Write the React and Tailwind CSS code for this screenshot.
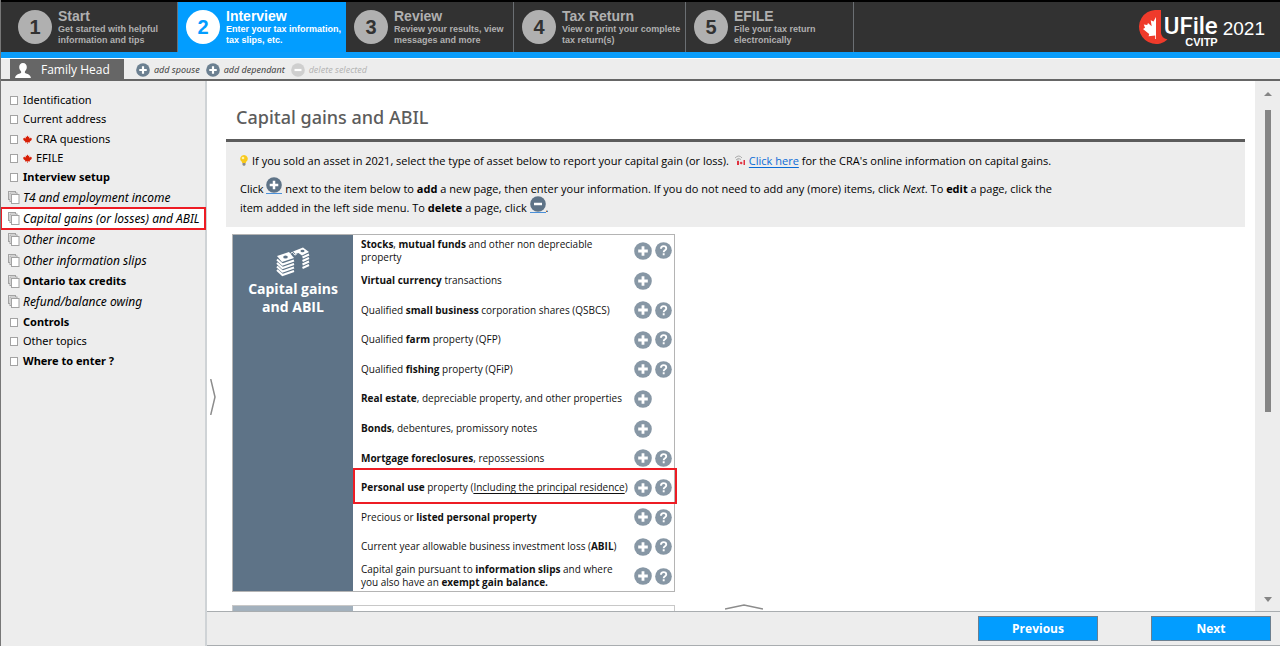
import React from "react";

const steps = [
  { n: 1, title: "Start", lines: ["Get started with helpful", "information and tips"], width: "w-[177px] pl-[17px]" },
  { n: 2, title: "Interview", lines: ["Enter your tax information,", "tax slips, etc."], width: "w-[168px] pl-[8px]", active: true },
  { n: 3, title: "Review", lines: ["Review your results, view", "messages and more"], width: "w-[168px] pl-[8px]" },
  { n: 4, title: "Tax Return", lines: ["View or print your complete", "tax return(s)"], width: "w-[172px] pl-[8px]" },
  { n: 5, title: "EFILE", lines: ["File your tax return", "electronically"], width: "w-[168px] pl-[8px]" },
];

const menu = [
  { label: "Identification", kind: "page", h: "h-[19px]" },
  { label: "Current address", kind: "page", h: "h-[19px]" },
  { label: "CRA questions", kind: "page", h: "h-[20px]", leaf: true },
  { label: "EFILE", kind: "page", h: "h-[19px]", leaf: true },
  { label: "Interview setup", kind: "page", h: "h-[19px]", bold: true },
  { label: "T4 and employment income", kind: "stack", h: "h-[21px]", italic: true },
  { label: "Capital gains (or losses) and ABIL", kind: "stack", h: "h-[21px]", italic: true, selected: true },
  { label: "Other income", kind: "stack", h: "h-[21px]", italic: true },
  { label: "Other information slips", kind: "stack", h: "h-[21px]", italic: true },
  { label: "Ontario tax credits", kind: "stack", h: "h-[20px]", bold: true },
  { label: "Refund/balance owing", kind: "stack", h: "h-[21px]", italic: true },
  { label: "Controls", kind: "page", h: "h-[20px]", bold: true },
  { label: "Other topics", kind: "page", h: "h-[19px]" },
  { label: "Where to enter ?", kind: "page", h: "h-[20px]", bold: true },
];

const items = [
  { name: "Stocks", help: true, text: <><b>Stocks</b>, <b>mutual funds</b> and other non depreciable<br />property</> },
  { name: "Virtual currency", text: <><b>Virtual currency</b> transactions</> },
  { name: "Small business shares", help: true, text: <>Qualified <b>small business</b> corporation shares (QSBCS)</> },
  { name: "Farm property", help: true, text: <>Qualified <b>farm</b> property (QFP)</> },
  { name: "Fishing property", help: true, text: <>Qualified <b>fishing</b> property (QFiP)</> },
  { name: "Real estate", text: <><b>Real estate</b>, depreciable property, and other properties</> },
  { name: "Bonds", text: <><b>Bonds</b>, debentures, promissory notes</> },
  { name: "Mortgage foreclosures", help: true, text: <><b>Mortgage foreclosures</b>, repossessions</> },
  { name: "Personal use property", help: true, marked: true, text: <><b>Personal use</b> property (<span className="underline underline-offset-2">Including the principal residence</span>)</> },
  { name: "Listed personal property", help: true, text: <>Precious or <b>listed personal property</b></> },
  { name: "ABIL", help: true, text: <>Current year allowable business investment loss (<b>ABIL</b>)</> },
  { name: "Information slips", help: true, text: <>Capital gain pursuant to <b>information slips</b> and where<br />you also have an <b>exempt gain balance.</b></> },
];

const LEAF = "M12 1 14.4 5.6 17 4.3 16 10 19.4 6.8 20.2 8.8 23.5 8.3 22.3 11.6 24 12.7 18 17.6 18.6 20 12.6 19.2 12.8 24H11.2L11.4 19.2 5.4 20 6 17.6 0 12.7 1.7 11.6.5 8.3 3.8 8.8 4.6 6.8 8 10 7 4.3 9.6 5.6Z";

function Sign({ kind, className, disc }) {
  return (
    <svg viewBox="0 0 18 18" className={className} aria-hidden="true">
      <circle cx="9" cy="9" r="8.8" fill={disc} />
      {kind === "help" ? (
        <path d="M6.3 7.2C6.3 5.3 7.4 4.4 9.1 4.4s2.8.9 2.8 2.4c0 2-2.700 1.900-2.700 4M9.200 12v2" fill="none" stroke="#fff" strokeWidth="2" />
      ) : (
        <path d={kind === "plus" ? "M9 4.2v9.6M4.2 9h9.6" : "M4.5 9h9"} stroke="#fff" strokeWidth="2.8" />
      )}
    </svg>
  );
}

function PageIcon({ kind }) {
  return (
    <svg viewBox="0 0 12 13" className="h-[13px] w-[12px] shrink-0" aria-hidden="true" fill="#fff" stroke="#a3a3a3">
      {kind === "stack" ? (
        <>
          <rect x=".5" y=".5" width="7" height="8" />
          <rect x="2" y="2" width="7" height="8.5" />
          <rect x="3.5" y="3.5" width="7.5" height="9" />
        </>
      ) : (
        <rect x="2.5" y="2.5" width="7" height="8" />
      )}
    </svg>
  );
}

function Header() {
  return (
    <header className="flex h-[58px] shrink-0 items-stretch justify-between border-t-2 border-b-[6px] border-t-black border-b-[#0a9dfb] bg-[#323232] font-['Liberation_Sans',Arial,sans-serif]">
      <nav className="flex">
        {steps.map((s) => (
          <a
            key={s.n}
            href={"#step" + s.n}
            className={
              "flex items-center gap-[6px] border-r " + s.width +
              (s.active ? " border-[#029dff] bg-[#029dff] text-white" : " border-[#6b6f73] text-[#b0b0b0]")
            }
          >
            <span
              className={
                "flex size-[34px] shrink-0 items-center justify-center rounded-full text-[20px] font-bold " +
                (s.active ? "bg-white text-[#029dff]" : "bg-[#b0b0b0] text-[#323232]")
              }
            >
              {s.n}
            </span>
            <span className="whitespace-nowrap text-[9px] leading-[11px] font-bold">
              <span className="block text-[14px] leading-[15px]">{s.title}</span>
              {s.lines[0]}
              <br />
              {s.lines[1]}
            </span>
          </a>
        ))}
      </nav>
      <div className="flex items-center pr-[15px] text-white">
        <svg viewBox="0 0 30 36" className="h-[36px] w-[30px]" aria-hidden="true">
          <path d="M23 1H17A17 17 0 1 0 29.5 30.5Q23.5 29 23 24Z" fill="#ef3b2b" />
          <path d="M18 8 15.5 12.5 12.7 11.2 13.7 17.2 10 14 9.2 16 5.8 15.4 7 18.8 5 20 11.2 25 10.6 27.2 17.2 26.4 17.2 30H18Z" fill="#fff" />
        </svg>
        <div className="-ml-[4px] flex flex-col items-end pt-[9px]">
          <span className="font-[Roboto,sans-serif] text-[24px] leading-[21px] font-medium">UFile</span>
          <span className="text-[11px] leading-[10px] font-bold">CVITP</span>
        </div>
        <span className="ml-[5px] pt-[4px] text-[19px] leading-[20px]">2021</span>
      </div>
    </header>
  );
}

function PersonBar() {
  return (
    <div className="mt-px flex h-[22px] shrink-0 items-stretch border-b-2 border-[#666] bg-[#ededed] pl-[9px]">
      <a href="#head" className="flex w-[114px] items-center gap-[10px] bg-[#666] pt-[2px] pl-[5px] text-[12px] text-white">
        <svg viewBox="0 0 16 15" className="h-[15px] w-[16px]" aria-hidden="true" fill="#fff">
          <path d="M8 0c2.400 0 3.800 1.700 3.800 4 0 2-.9 3.500-1.900 4.400v1.500c2 .9 6 1.500 6 5.100H.1c0-3.600 4-4.200 6-5.100V8.400C5.100 7.500 4.200 6 4.200 4 4.200 1.700 5.600 0 8 0Z" />
        </svg>
        Family Head
      </a>
      <div className="flex items-center gap-[6px] pt-[2px] pl-[12px] font-['Noto_Sans',sans-serif] text-[9px] text-[#444] italic">
        <button type="button" className="flex items-center gap-[4px] italic">
          <Sign kind="plus" disc="#6c8091" className="size-[14px]" />add spouse
        </button>
        <button type="button" className="flex items-center gap-[4px] italic">
          <Sign kind="plus" disc="#6c8091" className="size-[14px]" />add dependant
        </button>
        <button type="button" disabled className="flex items-center gap-[4px] text-[#b5b5b5] italic">
          <Sign kind="minus" disc="#cfcfcf" className="size-[14px]" />delete selected
        </button>
      </div>
    </div>
  );
}

function Sidebar() {
  return (
    <nav className="w-[206px] shrink-0 border-r-2 border-[#cfd3d6] bg-[#ededed] pt-[10px] font-['Noto_Sans',sans-serif] text-black">
      <ul>
        {menu.map((m) => (
          <li key={m.label} className="relative">
            <a
              href="#page"
              className={
                "flex items-center gap-[3px] pl-[7px] whitespace-nowrap " + m.h +
                (m.italic ? " text-[12px] italic" : " text-[11px]") +
                (m.bold ? " font-bold" : "") +
                (m.selected ? " bg-white" : "")
              }
            >
              <PageIcon kind={m.kind} />
              {m.leaf && (
                <svg viewBox="0 0 24 24" className="mr-px size-[9px] shrink-0" aria-hidden="true">
                  <path d={LEAF} fill="#d81e05" />
                </svg>
              )}
              {m.label}
            </a>
            {m.selected && <span className="pointer-events-none absolute inset-y-[-1px] left-[-1px] right-[-1px] border-2 border-[#ed1c24]" />}
          </li>
        ))}
      </ul>
    </nav>
  );
}

function MoneyIcon() {
  return (
    <svg viewBox="0 0 34 30" className="h-[30px] w-[34px]" aria-hidden="true">
      <path d="M1 9 13 5 18 11 6 15Z" fill="#fff" />
      <ellipse cx="9.500" cy="10" rx="2.300" ry="1.500" fill="#5e7387" />
      <g fill="none" stroke="#fff" strokeWidth="2">
        <path d="M1 12.500 6.500 17.500 18 13.500M1 16 6.500 21 18 17M1 19.500 6.500 24.500 18 20.500M1 23 6.500 28 18 24" />
      </g>
      <path d="M17 4.500 27 .5 33 5 26 8.500 22.500 6 19.500 7Z" fill="#fff" />
      <ellipse cx="26.500" cy="4" rx="2" ry="1.200" fill="#5e7387" />
      <path d="M14.500 6.500q2-2.500 3 0t3 1" fill="none" stroke="#fff" />
      <path d="M26.500 10.500 33 7.500M26.500 14 33 11M26.500 17.500 33 14.500M26.500 21 33 18" stroke="#fff" strokeWidth="2" />
    </svg>
  );
}

function Intro() {
  return (
    <div className="border-t-[3px] border-[#5c5c5c] bg-[#ededed] px-[14px] pt-[9px] pb-[10px] text-[11px] leading-[19px] text-black">
      <p>
        <svg viewBox="0 0 8 11" className="mr-[4px] inline h-[11px] w-[8px] align-[-1px]" aria-hidden="true">
          <path d="M4 0a3.700 3.700 0 0 1 2.200 6.700L5.800 8H2.200L1.800 6.700A3.700 3.700 0 0 1 4 0Z" fill="#f8c91c" />
          <circle cx="3" cy="3" r="1.300" fill="#fff3a8" />
          <path d="M2.500 8h3v2L4 11 2.500 10Z" fill="#8a8a8a" />
        </svg>
        If you sold an asset in 2021, select the type of asset below to report your capital gain (or loss).{" "}
        <a href="#cra" className="text-[#0a6bd6] underline underline-offset-2">
          <svg viewBox="0 0 12 11" className="mr-[3px] ml-[2px] inline h-[11px] w-[12px] align-[-1px]" aria-hidden="true">
            <path d="M1 3q4-4 7 0M2 5q2-3 5-.5M4 4v5" fill="none" stroke="#aaa" />
            <path d="M3 6h2v4H3ZM9.500 5h1.500v5H9.500ZM5.500 8 7 6.500 8.800 8 7.200 9.500Z" fill="#e0313f" />
          </svg>
          Click here
        </a>{" "}
        for the CRA's online information on capital gains.
      </p>
      <p className="mt-[9px]">
        Click{" "}
        <a href="#add" aria-label="Add" className="-mt-[4px] inline-block border-b border-[#4a90d9] align-[-1px] leading-none">
          <Sign kind="plus" disc="#5e7387" className="size-[16px]" />
        </a>{" "}
        next to the item below to <b>add</b> a new page, then enter your information. If you do not need to add any (more) items, click <i>Next</i>. To <b>edit</b> a page, click the
        <br />
        item added in the left side menu. To <b>delete</b> a page, click{" "}
        <a href="#delete" aria-label="Delete" className="-mt-[4px] inline-block border-b border-[#4a90d9] align-[-1px] leading-none">
          <Sign kind="minus" disc="#5e7387" className="size-[16px]" />
        </a>
        .
      </p>
    </div>
  );
}

function Card() {
  return (
    <section className="mt-[7px] ml-[6px] flex h-[358px] w-[443px] shrink-0 border border-[#b4b4b4] bg-white">
      <h2 className="flex w-[120px] shrink-0 flex-col items-center bg-[#5e7387] pt-[12px] text-center text-[14px] leading-[18px] font-bold text-white">
        <MoneyIcon />
        <span className="mt-[3px]">Capital gains<br />and ABIL</span>
      </h2>
      <ul className="flex flex-1 flex-col text-[10px] leading-[13px] text-[#111]">
        {items.map((it, i) => (
          <li
            key={it.name}
            className={"relative flex items-center pr-[2px] pl-[8px] whitespace-nowrap " + (i === 0 ? "h-[31px] shrink-0" : "flex-1")}
          >
            <span className="w-[273px] shrink-0">{it.text}</span>
            <button type="button" aria-label={"Add " + it.name} className="mr-[3px]">
              <Sign kind="plus" disc="#8797a5" className="size-[18px]" />
            </button>
            {it.help && (
              <button type="button" aria-label={"Help on " + it.name}>
                <Sign kind="help" disc="#8797a5" className="size-[17px]" />
              </button>
            )}
            {it.marked && <span className="pointer-events-none absolute -top-[5px] right-[-3px] bottom-[-2px] left-0 border-2 border-[#ed1c24]" />}
          </li>
        ))}
      </ul>
    </section>
  );
}

function ScrollRail() {
  return (
    <div className="flex w-[25px] shrink-0 flex-col items-center justify-between bg-[#ededed] pt-[11px] pb-[9px]" aria-hidden="true">
      <svg viewBox="0 0 8 4" className="h-[4px] w-[8px]"><path d="M0 4 4 0 8 4Z" fill="#858585" /></svg>
      <div className="mt-[14px] flex w-full flex-1 justify-center">
        <div className="h-[62%] w-[6px] bg-[#858585]" />
      </div>
      <svg viewBox="0 0 8 5" className="h-[5px] w-[8px]"><path d="M0 0H8L4 5Z" fill="#858585" /></svg>
    </div>
  );
}

export default function App() {
  const action = "h-[25px] w-[120px] border border-[#6b7f90] bg-[#029dff] text-[12px] font-bold text-white";
  return (
    <div className="flex h-screen flex-col overflow-hidden border-l border-[#777] bg-white font-['Open_Sans','Noto_Sans',sans-serif]">
      <Header />
      <PersonBar />
      <div className="flex min-h-0 flex-1">
        <Sidebar />
        <div className="flex min-w-0 flex-1 flex-col">
          <div className="relative flex min-h-0 flex-1">
            <main className="flex min-w-0 flex-1 flex-col overflow-hidden pr-[10px] pl-[19px]">
              <h1 className="pt-[24px] pb-[9px] pl-[10px] font-['Noto_Sans',sans-serif] text-[18px] leading-[25px] font-medium text-[#5c5c5c]">Capital gains and ABIL</h1>
              <Intro />
              <Card />
              <div className="mt-[13px] ml-[6px] flex h-[60px] w-[443px] shrink-0 border border-[#c8c8c8]">
                <div className="w-[120px] bg-[#a3b1bd]" />
              </div>
            </main>
            <ScrollRail />
            <svg viewBox="0 0 6 36" className="absolute top-[298px] left-[3px] h-[36px] w-[6px]" aria-hidden="true">
              <path d="M.7 0 5 18 .7 36" fill="none" stroke="#8c8c8c" strokeWidth="1.500" />
            </svg>
            <svg viewBox="0 0 38 6" className="absolute bottom-[1px] left-1/2 h-[6px] w-[38px] -translate-x-1/2" aria-hidden="true">
              <path d="M0 5 19 1 38 5" fill="none" stroke="#8c8c8c" strokeWidth="1.500" />
            </svg>
          </div>
          <footer className="flex h-[35px] shrink-0 items-center justify-end gap-[53px] border-y border-[#a9adb0] bg-[#ededed] pr-[9px]">
            <button type="button" className={action}>Previous</button>
            <button type="button" className={action}>Next</button>
          </footer>
        </div>
      </div>
    </div>
  );
}
